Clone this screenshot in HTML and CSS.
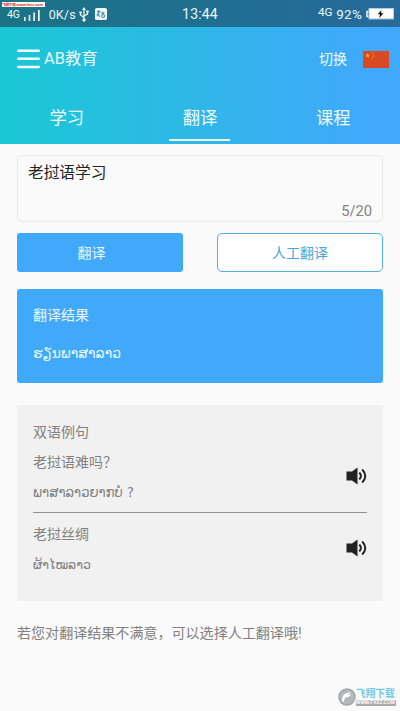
FILE: index.html
```html
<!DOCTYPE html>
<html lang="zh-CN">
<head>
<meta charset="utf-8">
<meta name="viewport" content="width=device-width, initial-scale=1">
<title>AB教育</title>
<link rel="stylesheet" href="styles.css">
</head>
<body>
<div class="status">
  <div class="promo"><span>飞翔下载</span> www.fxxz.com</div>
  <div class="status-left">
    <span class="net">4G</span>
    <svg class="signal" width="16" height="11" viewBox="0 0 16 11" fill="currentColor"><path d="M0 7h1.600v4H0zM4.700 5h1.600v6H4.700zM9.300 2.500h1.600V11H9.300zM14 0h1.700v11H14z"/></svg>
    <span class="speed">0K/s</span>
    <svg class="usb" width="10" height="15" viewBox="0 0 10 15" fill="none" stroke="currentColor" stroke-width="1.300"><path d="M5 2v11M5 10.500L1.500 8V5.500M5 9l3.500-2V4.500"/><path d="M5 0l2 3H3z" fill="currentColor" stroke="none"/><circle cx="5" cy="13" r="1.700" fill="currentColor" stroke="none"/><path d="M.3 4.500h2.400v2H.3zM7.300 3.500h2.400v2H7.300z" fill="currentColor" stroke="none"/></svg>
    <svg class="app" width="12" height="12" viewBox="0 0 13 13"><rect width="13" height="13" rx="2" fill="#f2fafa"/><path d="M2 4h4M4 2.500v5.500q0 1 1.500 1M2.500 6v3M6.500 5.500h4M8.500 4v2" fill="none" stroke="#1d7990"/><circle cx="8.800" cy="8.700" r="1.600" fill="none" stroke="#1d7990"/></svg>
  </div>
  <div class="clock">13:44</div>
  <div class="status-right">
    <span class="net net-right">4G</span>
    <span class="percent">92%</span>
    <svg width="28" height="12" viewBox="0 0 28 12"><path d="M2.500 3.500H1v5h1.500" fill="none" stroke="#eef6fa" stroke-width="1.500"/><rect x="3" y=".6" width="24.500" height="10.300" fill="#fff" stroke="#b8d0dd"/><path d="M15.500 2L11.700 6.300H14L13.200 10l4.300-4.800H15z" fill="#111"/></svg>
  </div>
</div>
<header class="header">
  <div class="bar">
    <svg class="menu" width="23" height="20" viewBox="0 0 23 20" fill="none" stroke="#f3ffff" stroke-width="2.600" stroke-linecap="round"><path d="M1.300 1.700h20.400M1.300 9.800h20.400M1.300 18h20.400"/></svg>
    <h1 class="title">AB教育</h1>
    <span class="switch">切换</span>
    <svg class="flag" width="26" height="17" viewBox="0 0 26 17"><rect width="26" height="17" fill="#d94922"/><path d="M4.700 2.200l.6 1.500h1.600L5.600 4.800l.5 1.600-1.400-1-1.400 1 .5-1.600-1.300-1.100h1.600z" fill="#ffc125"/><path d="M8.500 1.300h1M10 3h1M10 5.200h1M8.500 7h1" stroke="#f0a030"/></svg>
  </div>
  <nav class="tabs">
    <a class="tab">学习</a>
    <a class="tab active"><span>翻译</span></a>
    <a class="tab">课程</a>
  </nav>
</header>
<main class="main">
  <section class="input">
    <div class="query">老挝语学习</div>
    <div class="count">5/20</div>
  </section>
  <div class="actions">
    <div class="btn primary">翻译</div>
    <div class="btn outline">人工翻译</div>
  </div>
  <section class="result">
    <div class="result-title">翻译结果</div>
    <div class="lao" lang="lo">ຮຽນພາສາລາວ</div>
  </section>
  <section class="examples">
    <div class="line">双语例句</div>
    <div class="example first">
      <div>
        <div class="line">老挝语难吗？</div>
        <div class="line lao" lang="lo">ພາສາລາວຍາກບໍ ?</div>
      </div>
      <svg class="speaker" width="21" height="18" viewBox="0 0 21 18"><path d="M.5 4.500H6L11.500.5v17L6 13.500H.5z" fill="#222"/><path d="M13.300 5.500q3.200 3.500 0 7M16.200 2.500q6.200 6.500 0 13" fill="none" stroke="#222" stroke-width="1.900"/></svg>
    </div>
    <div class="example second">
      <div>
        <div class="line">老挝丝绸</div>
        <div class="line lao silk" lang="lo">ຜ້າໄໝລາວ</div>
      </div>
      <svg class="speaker" width="21" height="18" viewBox="0 0 21 18"><path d="M.5 4.500H6L11.500.5v17L6 13.500H.5z" fill="#222"/><path d="M13.300 5.500q3.200 3.500 0 7M16.200 2.500q6.200 6.500 0 13" fill="none" stroke="#222" stroke-width="1.900"/></svg>
    </div>
  </section>
  <p class="note">若您对翻译结果不满意，可以选择人工翻译哦!</p>
</main>
<div class="mark">
  <svg width="18" height="18" viewBox="0 0 18 18"><circle cx="9" cy="9" r="8" fill="#b4b8ba" stroke="#a2a6a8" stroke-width="1.500"/><path d="M4 13Q3 5 13 4q-1 2-4 2.500 3 0 4-.5-1 3-4.500 3.300Q6 10 6 14z" fill="#fff"/></svg>
  <div class="mark-text"><b>飞翔下载</b><small>WWW.FXXZ.COM</small></div>
</div>
</body>
</html>
```

FILE: styles.css
```css
* { box-sizing: border-box; }
body {
  margin: 0;
  height: 711px;
  overflow: hidden;
  position: relative;
  background: #fafafa;
  font-family: Roboto, "Noto Sans CJK SC", sans-serif;
  color: #818181;
}
svg { display: block; flex: none; }
.status {
  position: relative;
  height: 27px;
  display: grid;
  grid-template-columns: 1fr auto 1fr;
  align-items: center;
  background: linear-gradient(90deg, #1b7485, #1f6f91 50%, #276a9b);
  color: #edf8fa;
}
.promo {
  position: absolute;
  left: 2px;
  top: 2px;
  width: 43px;
  height: 5px;
  background: #fff;
  color: #d22;
  font: bold 4px/5px "Liberation Sans", "Noto Sans CJK SC", sans-serif;
  letter-spacing: -.1px;
  white-space: nowrap;
}
.promo span { font-size: 3.500px; }
.status-left { display: flex; align-items: center; padding: 1px 0 0 7px; }
.net { font-size: 10.500px; letter-spacing: -.2px; }
.signal { margin: 2px 0 0 4px; }
.speed { font-size: 12.500px; margin-left: 9px; letter-spacing: .15px; white-space: nowrap; }
.usb { margin-left: 3px; }
.app { margin-left: 6px; }
.clock { font-size: 14px; line-height: 26px; padding-top: 1px; letter-spacing: .2px; }
.status-right { display: flex; align-items: center; justify-content: flex-end; padding-right: 6px; }
.net-right { margin: -3px 4px 0 0; font-size: 11.800px; }
.percent { font-size: 13.500px; letter-spacing: .2px; margin-right: 4px; }

.header {
  height: 117px;
  background: linear-gradient(90deg, #1ac8d5, #2fb7e8 50%, #40a9fb 90%);
  color: #effcff;
}
.bar { display: flex; align-items: center; height: 64px; padding: 0 11px 0 17px; }
.title { margin: 0 auto 0 4px; font-size: 16.300px; font-weight: 400; letter-spacing: .1px; line-height: 24px; }
.switch { font-size: 14px; line-height: 22px; }
.flag { margin-left: 16px; }
.tabs { display: grid; grid-template-columns: repeat(3, 1fr); height: 53px; }
.tab { text-align: center; font-size: 17.300px; line-height: 26px; padding-top: 14px; }
.active span { display: block; width: 61px; height: 36px; margin: 0 auto; border-bottom: 2px solid #effcff; }

.main { padding: 11px 17px 0; }
.input {
  height: 67px;
  border: 1px solid #e9e9e9;
  border-radius: 5px;
  padding: 5px 10px 0;
  display: flex;
  flex-direction: column;
}
.query { color: #222; font-size: 15.700px; line-height: 24px; }
.count { align-self: flex-end; font-size: 14.700px; line-height: 20px; margin-top: 16px; }
.actions { display: grid; grid-template-columns: 166px 166px; gap: 34px; margin-top: 11px; }
.btn { height: 39px; border-radius: 3px; font-size: 14px; line-height: 40px; text-align: center; }
.primary { background: #41a9fa; color: #e9f8ff; padding-right: 17px; }
.outline { background: #fff; border: 1px solid #55aee0; border-radius: 5px; color: #4ba6dc; line-height: 38px; }
.result {
  margin-top: 17px;
  height: 94px;
  border-radius: 3px;
  background: #41a9fa;
  color: #e9f8ff;
  padding: 14px 16px;
  font-size: 14px;
  line-height: 24px;
}
.lao { font-family: "DejaVu Sans", sans-serif; font-size: 14px; }
.result .lao { margin-top: 14px; }
.examples {
  margin-top: 22px;
  height: 196px;
  background: #f1f1f1;
  padding: 12px 16px;
  font-size: 14px;
}
.line { height: 30px; line-height: 30px; white-space: nowrap; }
.line.lao { font-size: 13.200px; line-height: 32px; }
.line.silk { font-size: 12.500px; }
.example { display: flex; justify-content: space-between; align-items: center; }
.first { height: 66px; padding-bottom: 6px; border-bottom: 1px solid #929292; }
.first .speaker { margin-top: -2px; }
.second { height: 72px; }
.second .speaker { margin-top: -2px; }
.note { margin: 21px 0 0; font-size: 14.050px; line-height: 22px; white-space: nowrap; }
.mark {
  position: absolute;
  left: 338px;
  top: 688px;
  display: flex;
  width: 58px;
  height: 19px;
}
.mark-text { width: 40px; }
.mark-text b { display: block; font-size: 9.700px; line-height: 12px; color: #70c8e5; white-space: nowrap; }
.mark-text small {
  display: block;
  background: #aaa;
  color: #fff;
  font: bold 4.700px/6px "Liberation Sans", sans-serif;
  white-space: nowrap;
}
```
